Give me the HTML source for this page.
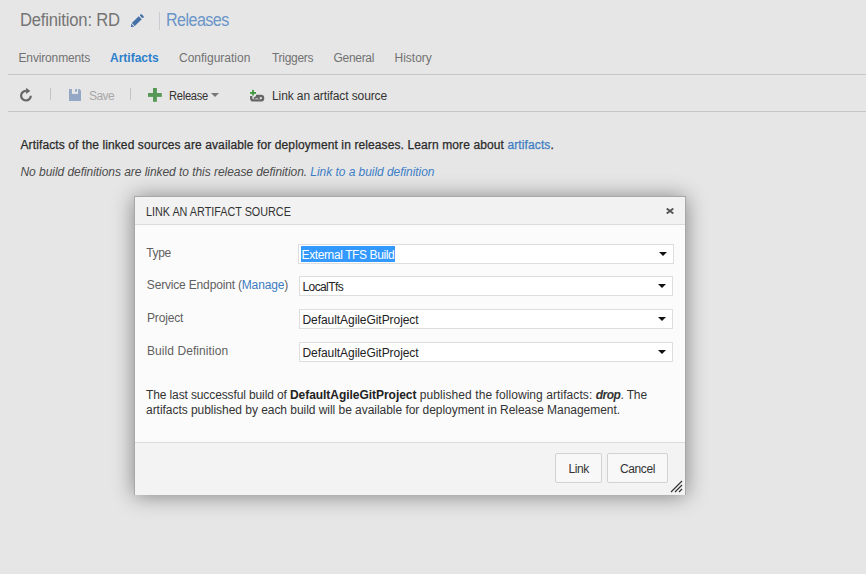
<!DOCTYPE html>
<html><head><meta charset="utf-8">
<style>
html,body{margin:0;padding:0;}
body{width:866px;height:574px;overflow:hidden;background:#e6e6e6;position:relative;font-family:"Liberation Sans",sans-serif;}
.t{position:absolute;white-space:nowrap;line-height:1;}
.ln{position:absolute;height:1px;background:#c6c6c6;}
.sep{position:absolute;width:1px;background:#c4c4c4;}
#dlg{position:absolute;left:134px;top:196px;width:550px;height:297px;border:1px solid #a8a8a8;background:#fbfbfb;box-shadow:0 1px 20px rgba(0,0,0,0.44);}
#hdr{position:absolute;left:0;top:0;width:550px;height:27px;background:#f2f2f2;border-bottom:1px solid #dcdcdc;}
#ftr{position:absolute;left:0;top:245px;width:550px;height:52px;background:#f3f3f3;border-top:1px solid #dcdcdc;}
.dd{position:absolute;background:#fff;border:1px solid #dedede;box-sizing:border-box;}
.arr{position:absolute;width:0;height:0;border-left:4px solid transparent;border-right:4px solid transparent;border-top:4px solid #111;}
.btn{position:absolute;top:453px;height:30px;box-sizing:border-box;border:1px solid #d2d2d2;border-radius:2px;background:#f8f8f8;}
</style></head>
<body>
<!-- header title -->
<div class="t" style="left:20px;top:12px;font-size:17.5px;color:#747474;letter-spacing:-0.2px;transform:scaleX(0.95);transform-origin:0 0;">Definition: RD</div>
<svg style="position:absolute;left:126px;top:8px" width="24" height="24" viewBox="0 0 24 24">
  <g transform="translate(4.9,19) rotate(-45)" fill="#4670a8">
    <path d="M0 0 L2.6 -2.15 L2.6 2.15 Z"/>
    <rect x="3.4" y="-2.15" width="9.8" height="4.3"/>
    <rect x="14.4" y="-2.25" width="2.2" height="4.5" rx="1.1"/>
  </g>
</svg>
<div class="sep" style="left:159px;top:12px;height:18px;background:#cbcbd2;"></div>
<div class="t" style="left:166.3px;top:12px;font-size:17.5px;color:#6a95c8;letter-spacing:-0.6px;transform:scaleX(0.92);transform-origin:0 0;">Releases</div>

<!-- tabs -->
<div class="t" style="left:18.5px;top:52px;font-size:12px;color:#727272;letter-spacing:-0.15px;">Environments</div>
<div class="t" style="left:110px;top:52px;font-size:12px;color:#2d80cc;font-weight:bold;">Artifacts</div>
<div class="t" style="left:179px;top:52px;font-size:12px;color:#727272;">Configuration</div>
<div class="t" style="left:272px;top:52px;font-size:12px;color:#727272;letter-spacing:-0.3px;">Triggers</div>
<div class="t" style="left:333.5px;top:52px;font-size:12px;color:#727272;letter-spacing:-0.3px;">General</div>
<div class="t" style="left:394.5px;top:52px;font-size:12px;color:#727272;">History</div>
<div class="ln" style="left:8px;top:74px;width:858px;"></div>

<!-- toolbar -->
<svg style="position:absolute;left:16px;top:84px" width="20" height="20" viewBox="0 0 20 20">
  <path d="M14.8 11.65 A4.85 4.85 0 1 1 10.2 6.8" fill="none" stroke="#666" stroke-width="2.2"/>
  <path d="M10.1 3.8 L14.3 7.05 L10.1 10.1 Z" fill="#666"/>
</svg>
<div class="sep" style="left:50px;top:88px;height:12px;"></div>
<svg style="position:absolute;left:64px;top:84px" width="20" height="20" viewBox="0 0 20 20">
  <path d="M5 5 H15.5 L17 6.5 V17 H5 Z" fill="#94a8c5"/>
  <rect x="7.9" y="5" width="6.2" height="4.9" fill="#e8e8e8"/>
  <rect x="11" y="5" width="1.9" height="2.8" fill="#94a8c5"/>
</svg>
<div class="t" style="left:89px;top:90px;font-size:12px;color:#a8a8a8;letter-spacing:-0.6px;">Save</div>
<div class="sep" style="left:130px;top:88px;height:12px;"></div>
<svg style="position:absolute;left:148px;top:88px" width="14" height="14" viewBox="0 0 14 14">
  <rect x="5" y="0" width="3.9" height="13.8" fill="#579857"/>
  <rect x="0" y="5" width="13.8" height="3.9" fill="#579857"/>
</svg>
<div class="t" style="left:169px;top:90px;font-size:12px;color:#333;letter-spacing:-0.3px;transform:scaleX(0.93);transform-origin:0 0;">Release</div>
<div class="arr" style="left:211px;top:93px;border-top-color:#777;border-left-width:4px;border-right-width:4px;"></div>
<svg style="position:absolute;left:246px;top:84px" width="22" height="22" viewBox="0 0 22 22">
  <rect x="6.1" y="5.9" width="1.8" height="5.6" fill="#409840"/>
  <rect x="4" y="8" width="6" height="1.8" fill="#409840"/>
  <path d="M5.2 12 V14.2 A2.2 2.2 0 0 0 7.4 16.4 H14.9 A2.25 2.25 0 0 0 14.9 11.9 H10" fill="none" stroke="#666" stroke-width="2.3"/>
  <path d="M7.8 14.5 L10.2 13.1 L14 14.3" fill="none" stroke="#666" stroke-width="1.8"/>
</svg>
<div class="t" style="left:272px;top:90px;font-size:12px;color:#333;letter-spacing:-0.1px;">Link an artifact source</div>
<div class="ln" style="left:8px;top:111px;width:858px;"></div>

<!-- content -->
<div class="t" style="left:20.5px;top:139.4px;font-size:12px;color:#2a2a2a;letter-spacing:0.11px;-webkit-text-stroke:0.25px #2a2a2a;">Artifacts of the linked sources are available for deployment in releases. Learn more about <span style="color:#3d7cc2;-webkit-text-stroke-color:#3d7cc2;">artifacts</span>.</div>
<div class="t" style="left:20.5px;top:165.5px;font-size:12px;color:#4c4c4c;font-style:italic;letter-spacing:-0.05px;">No build definitions are linked to this release definition. <span style="color:#3f80c6;">Link to a build definition</span></div>

<!-- dialog -->
<div id="dlg">
  <div id="hdr"></div>
  <div id="ftr"></div>
</div>
<div class="t" style="left:145.5px;top:205.5px;font-size:12px;color:#333;transform:scaleX(0.9);transform-origin:0 0;">LINK AN ARTIFACT SOURCE</div>
<svg style="position:absolute;left:666px;top:208px" width="8" height="6" viewBox="0 0 8 6">
  <path d="M0.7 0.5 L7.3 5.5 M7.3 0.5 L0.7 5.5" stroke="#555" stroke-width="1.9"/>
</svg>

<div class="t" style="left:146.3px;top:246.8px;font-size:12px;color:#5f5f5f;letter-spacing:-0.35px;">Type</div>
<div class="t" style="left:146.8px;top:278.8px;font-size:12px;color:#5f5f5f;letter-spacing:-0.17px;">Service Endpoint (<span style="color:#3d7cc2">Manage</span>)</div>
<div class="t" style="left:147px;top:312px;font-size:12px;color:#5f5f5f;letter-spacing:-0.15px;">Project</div>
<div class="t" style="left:147px;top:344.7px;font-size:12px;color:#5f5f5f;letter-spacing:0.07px;">Build Definition</div>

<div class="dd" style="left:298px;top:244px;width:376px;height:20px;"></div>
<div style="position:absolute;left:301px;top:246px;width:94px;height:16px;background:#3399ff;"></div>
<div class="t" style="left:301.6px;top:249px;font-size:12px;color:#fff;letter-spacing:-0.4px;">External TFS Build</div>
<div class="arr" style="left:659px;top:252px;"></div>

<div class="dd" style="left:299px;top:276px;width:374px;height:20px;"></div>
<div class="t" style="left:302.5px;top:280.7px;font-size:12px;color:#222;letter-spacing:-0.6px;">LocalTfs</div>
<div class="arr" style="left:658px;top:284px;"></div>

<div class="dd" style="left:299px;top:309px;width:374px;height:20px;"></div>
<div class="t" style="left:302.5px;top:313.6px;font-size:12px;color:#222;letter-spacing:-0.06px;">DefaultAgileGitProject</div>
<div class="arr" style="left:658px;top:317px;"></div>

<div class="dd" style="left:299px;top:342px;width:374px;height:20px;"></div>
<div class="t" style="left:302.5px;top:346.6px;font-size:12px;color:#222;letter-spacing:-0.06px;">DefaultAgileGitProject</div>
<div class="arr" style="left:658px;top:350px;"></div>

<div class="t" style="left:146px;top:388.6px;font-size:12px;color:#333;"><span style="letter-spacing:-0.12px">The last successful build of </span><b style="color:#222;letter-spacing:-0.04px;">DefaultAgileGitProject</b><span style="letter-spacing:0.07px"> published the following artifacts: </span><b><i style="letter-spacing:-0.5px">drop</i></b><span style="letter-spacing:-0.1px">. The</span></div>
<div class="t" style="left:146px;top:404.3px;font-size:12px;color:#333;letter-spacing:-0.04px;">artifacts published by each build will be available for deployment in Release Management.</div>

<div class="btn" style="left:555px;width:47px;"></div>
<div class="t" style="left:568.5px;top:462.6px;font-size:12px;color:#333;letter-spacing:-0.4px;">Link</div>
<div class="btn" style="left:607px;width:61px;"></div>
<div class="t" style="left:620px;top:462.6px;font-size:12px;color:#333;letter-spacing:-0.4px;">Cancel</div>

<svg style="position:absolute;left:670px;top:480px" width="14" height="13" viewBox="0 0 14 13">
  <path d="M1 12 L12 1 M5 12 L12 5 M9 12 L12 9" stroke="#333" stroke-width="1.2"/>
</svg>
</body></html>
